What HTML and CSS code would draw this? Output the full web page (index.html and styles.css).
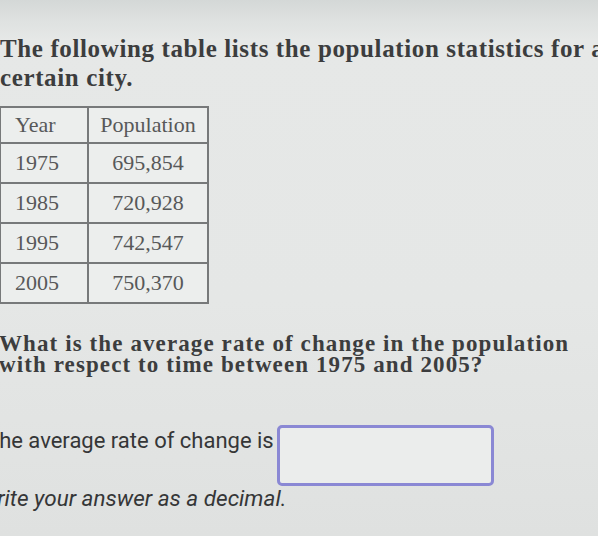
FILE: index.html
```html
<!DOCTYPE html>
<html>
<head>
<meta charset="utf-8">
<link rel="stylesheet" href="styles.css">
</head>
<body>
<div class="page">
  <p class="title">The following table lists the population statistics for a certain city.</p>
  <table class="stats">
    <thead>
      <tr><th class="year">Year</th><th class="pop">Population</th></tr>
    </thead>
    <tbody>
      <tr><td class="year">1975</td><td class="pop">695,854</td></tr>
      <tr><td class="year">1985</td><td class="pop">720,928</td></tr>
      <tr><td class="year">1995</td><td class="pop">742,547</td></tr>
      <tr><td class="year">2005</td><td class="pop">750,370</td></tr>
    </tbody>
  </table>
  <p class="question">What is the average rate of change in the population with respect to time between 1975 and 2005?</p>
  <div class="answer">
    <span class="answer-label">The average rate of change is</span>
    <span class="answer-box"></span>
  </div>
  <p class="hint">Write your answer as a decimal.</p>
</div>
</body>
</html>
```

FILE: styles.css
```css
html, body {
  margin: 0;
  padding: 0;
  width: 598px;
  height: 536px;
  overflow: hidden;
}
body {
  background: linear-gradient(180deg, #d4d8d7 0px, #dfe2e1 22px, #e6e8e7 40px, #e5e7e6 300px, #dfe1e0 536px);
}
.page {
  width: 660px;
  padding-top: 34px;
}
.title {
  margin: 0;
  width: 640px;
  font-family: "Liberation Serif", serif;
  font-weight: bold;
  font-size: 25px;
  letter-spacing: 0.62px;
  line-height: 29px;
  color: #3c3d3e;
}
.stats {
  margin-top: 14px;
  margin-left: -1px;
  border-collapse: collapse;
  font-family: "Liberation Serif", serif;
  font-size: 22px;
  color: #575859;
  background: #eceeed;
}
.stats th, .stats td {
  border: 2px solid #77797a;
  font-weight: normal;
  height: 38px;
  padding: 0;
}
.stats th {
  height: 34px;
}
.stats .year {
  width: 72px;
  text-align: left;
  padding-left: 14px;
}
.stats .pop {
  width: 118px;
  text-align: center;
}
.question {
  margin: 29px 0 0 -1px;
  width: 600px;
  font-family: "Liberation Serif", serif;
  font-weight: bold;
  font-size: 23px;
  letter-spacing: 1.1px;
  line-height: 21px;
  color: #3c3d3e;
}
.answer {
  display: flex;
  align-items: flex-start;
  margin: 50px 0 0 -14px;
  gap: 3px;
}
.answer-label {
  margin-top: 3px;
  font-family: Roboto, sans-serif;
  font-size: 22px;
  color: #353637;
}
.answer-box {
  width: 211px;
  height: 55px;
  border: 3px solid #8a88d4;
  border-radius: 5px;
  background: #ebedec;
}
.hint {
  margin: -1px 0 0 -22px;
  font-family: Roboto, sans-serif;
  font-style: italic;
  font-size: 22.5px;
  color: #353637;
}
```
